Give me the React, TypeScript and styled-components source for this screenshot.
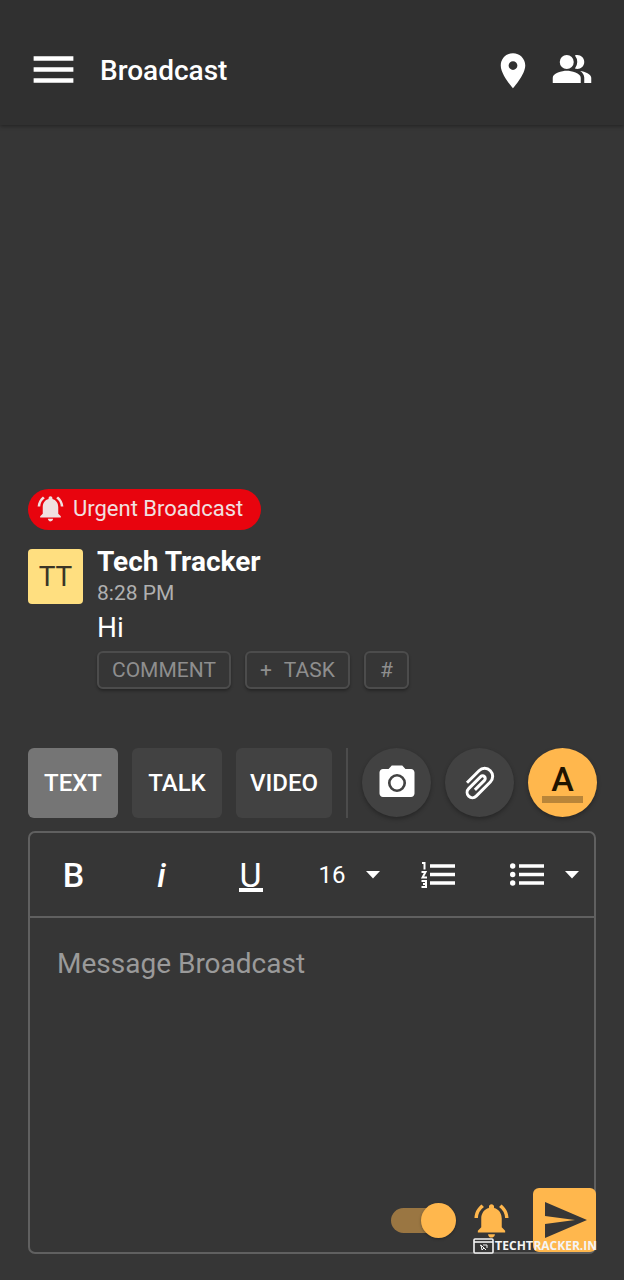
import React from 'react';
import styled, { createGlobalStyle } from 'styled-components';

const Global = createGlobalStyle`
  *, *::before, *::after { box-sizing: border-box; }
  body { margin: 0; background: #363636; color: #fff; font-family: Roboto, "Liberation Sans", sans-serif; }
  button, select, textarea { font-family: inherit; color: inherit; }
  button { border: 0; padding: 0; background: none; cursor: pointer; }
  svg { display: block; }
`;

const Page = styled.div`
  min-height: 100vh;
  display: flex;
  flex-direction: column;
`;

const Header = styled.header`
  display: flex;
  align-items: center;
  height: 125px;
  padding: 13px 31px 0 27px;
  background: #303030;
  box-shadow: 0 1px 4px rgba(0, 0, 0, 0.4);
`;

const Title = styled.h1`
  flex: 1;
  margin: 0 0 0 20px;
  padding-top: 4px;
  font-size: 28px;
  line-height: 32px;
  font-weight: 500;
`;

const HeaderActions = styled.div`
  display: flex;
  gap: 17px;
`;

const Feed = styled.main`
  flex: 1;
  display: flex;
  flex-direction: column;
  justify-content: flex-end;
  align-items: flex-start;
  padding: 28px 28px 59px;
`;

const Badge = styled.div`
  display: flex;
  align-items: center;
  gap: 7px;
  height: 41px;
  padding: 0 18px 3px 7px;
  border-radius: 21px;
  background: #e8040e;
  color: #f0e0e0;
  font-size: 22px;
  margin-bottom: 19px;
`;

const Message = styled.article`
  display: flex;
  gap: 14px;
`;

const Avatar = styled.div`
  display: grid;
  place-items: center;
  width: 55px;
  height: 55px;
  border-radius: 4px;
  background: #ffdf80;
  color: #3a3527;
  font-size: 28px;
`;

const Author = styled.h2`
  margin: -4px 0 0;
  font-size: 28px;
  line-height: 34px;
  font-weight: 700;
`;

const Time = styled.time`
  display: block;
  color: #b0b0b0;
  font-size: 21px;
  line-height: 28px;
`;

const Body = styled.p`
  margin: 4px 0 6px;
  font-size: 28px;
  line-height: 34px;
`;

const Chips = styled.div`
  display: flex;
  gap: 14px;
`;

const Chip = styled.button`
  display: flex;
  align-items: center;
  justify-content: center;
  gap: 12px;
  height: 38px;
  min-width: 45px;
  padding: 0 13px;
  border: 2px solid #4c4c4c;
  border-radius: 6px;
  box-shadow: 0 2px 3px rgba(0, 0, 0, 0.3);
  color: #8e8e8e;
  font-size: 21px;
`;

const Modes = styled.nav`
  display: flex;
  gap: 14px;
  padding-left: 28px;
`;

const Mode = styled.button<{ $active?: boolean }>`
  height: 70px;
  min-width: 90px;
  padding: 0 14px;
  border-radius: 6px;
  background: ${(p) => (p.$active ? '#757575' : '#424242')};
  font-size: 24px;
  font-weight: 500;
`;

const Divider = styled.span`
  width: 2px;
  background: #4c4c4c;
`;

const Round = styled.button<{ $accent?: boolean }>`
  display: flex;
  flex-direction: column;
  align-items: center;
  justify-content: center;
  width: 69px;
  height: 69px;
  border-radius: 50%;
  background: ${(p) => (p.$accent ? '#ffb74d' : '#424242')};
  color: ${(p) => (p.$accent ? '#1f1400' : '#fff')};
  box-shadow: 0 2px 4px rgba(0, 0, 0, 0.3);
`;

const ColorLetter = styled.span`
  font-size: 34px;
  line-height: 34px;
  font-weight: 500;
`;

const ColorBar = styled.span`
  width: 41px;
  height: 7px;
  background: #b98539;
`;

const Editor = styled.section`
  position: relative;
  display: flex;
  flex-direction: column;
  margin: 13px 28px 26px;
  border: 2px solid #606060;
  border-radius: 7px;
`;

const Toolbar = styled.div`
  display: grid;
  grid-template-columns: 87fr 89fr 89fr 108fr 69fr 122fr;
  height: 85px;
  border-bottom: 2px solid #606060;
`;

const Tool = styled.button`
  display: flex;
  align-items: center;
  justify-content: center;
  font-size: 34px;
  line-height: 34px;
`;

const Bold = styled.span`
  font-weight: 500;
`;

const Italic = styled.span`
  font-style: italic;
  font-weight: 500;
`;

const Underlined = styled.span`
  width: 24px;
  height: 34px;
  border-bottom: 4px solid #fff;
`;

const SizeField = styled.label`
  display: flex;
  align-items: center;
  justify-content: center;
  gap: 19px;
`;

const SizeSelect = styled.select`
  appearance: none;
  width: 28px;
  padding: 0;
  border: 0;
  background: none;
  font-size: 24px;
`;

const ListTool = styled(Tool)`
  justify-content: flex-end;
  gap: 21px;
  padding-right: 15px;
`;

const Input = styled.textarea`
  height: 270px;
  padding: 30px 27px;
  border: 0;
  outline: 0;
  resize: none;
  background: none;
  font-size: 28px;
  line-height: 32px;
  &::placeholder { color: #9a9a9a; opacity: 1; }
`;

const Actions = styled.div`
  display: flex;
  align-items: center;
  justify-content: flex-end;
  margin-right: -2px;
`;

const Switch = styled.input`
  appearance: none;
  display: flex;
  align-items: center;
  width: 65px;
  height: 25px;
  margin: 0 15px 0 0;
  cursor: pointer;
  background: linear-gradient(#9a7642, #9a7642) left / 60px 25px no-repeat;
  border-radius: 13px;
  &::before {
    content: "";
    width: 35px;
    height: 35px;
    flex: none;
    margin-left: 30px;
    border-radius: 50%;
    background: #ffb74d;
    box-shadow: 0 1px 3px rgba(0, 0, 0, 0.3);
  }
`;

const Alert = styled.button`
  color: #ffb74d;
  margin-right: 21px;
`;

const Send = styled.button`
  display: grid;
  place-items: center;
  width: 63px;
  height: 64px;
  border-radius: 6px;
  background: #ffb74d;
  color: #363636;
`;

const Watermark = styled.a`
  position: absolute;
  right: -3px;
  bottom: -2px;
  display: flex;
  align-items: center;
  gap: 1px;
  color: #f4f4f4;
  font-family: "Open Sans", sans-serif;
  font-size: 12px;
  line-height: 16px;
  font-weight: 700;
  text-decoration: none;
  text-transform: uppercase;
`;

const Initial = styled.span`
  font-size: 13px;
`;

const BellIcon = ({ size }: { size: number }) => (
  <svg width={size} height={size} viewBox="0 0 24 24" fill="currentColor">
    <path d="M7.58 4.08L6.15 2.65C3.75 4.48 2.17 7.3 2.03 10.5h2a8.445 8.445 0 0 1 3.55-6.42zm12.39 6.42h2c-.15-3.2-1.73-6.02-4.12-7.85l-1.42 1.43a8.495 8.495 0 0 1 3.54 6.42zM18 11c0-3.07-1.64-5.64-4.5-6.32V4c0-.83-.67-1.5-1.5-1.5s-1.5.67-1.5 1.5v.68C7.63 5.36 6 7.92 6 11v5l-2 2v1h16v-1l-2-2v-5zm-6 11c.14 0 .27-.01.4-.04.65-.14 1.18-.58 1.44-1.18.1-.24.15-.5.15-.78h-4c.01 1.1.9 2 2.01 2z" />
  </svg>
);

const Caret = () => (
  <svg width="14" height="8" viewBox="0 0 14 8" fill="currentColor">
    <path d="M0 0h14L7 7.5z" />
  </svg>
);

export default function App() {
  return (
    <Page>
      <Global />
      <Header>
        <button aria-label="Menu">
          <svg width="53" height="53" viewBox="0 0 24 24" fill="currentColor">
            <path d="M3 18h18v-2H3v2zm0-5h18v-2H3v2zm0-7v2h18V6H3z" />
          </svg>
        </button>
        <Title>Broadcast</Title>
        <HeaderActions>
          <button aria-label="Location">
            <svg width="42" height="42" viewBox="0 -1 24 24" fill="currentColor">
              <path d="M12 2C8.13 2 5 5.13 5 9c0 5.25 7 13 7 13s7-7.75 7-13c0-3.87-3.13-7-7-7zm0 9.5a2.5 2.5 0 0 1 0-5 2.5 2.5 0 0 1 0 5z" />
            </svg>
          </button>
          <button aria-label="Members">
            <svg width="42" height="42" viewBox="0 0 24 24" fill="currentColor">
              <path d="M16.67 13.13C18.04 14.06 19 15.32 19 17v3h4v-3c0-2.18-3.57-3.47-6.33-3.87z" />
              <circle cx="9" cy="8" r="4" />
              <path d="M15 12c2.21 0 4-1.79 4-4s-1.79-4-4-4c-.47 0-.91.1-1.33.24a5.98 5.98 0 0 1 0 7.52c.42.14.86.24 1.33.24zM9 13c-2.67 0-8 1.34-8 4v3h16v-3c0-2.66-5.33-4-8-4z" />
            </svg>
          </button>
        </HeaderActions>
      </Header>

      <Feed>
        <Badge>
          <BellIcon size={31} />
          Urgent Broadcast
        </Badge>
        <Message>
          <Avatar>TT</Avatar>
          <div>
            <Author>Tech Tracker</Author>
            <Time>8:28 PM</Time>
            <Body>Hi</Body>
            <Chips>
              <Chip>COMMENT</Chip>
              <Chip><span>+</span><span>TASK</span></Chip>
              <Chip>#</Chip>
            </Chips>
          </div>
        </Message>
      </Feed>

      <Modes>
        <Mode $active>TEXT</Mode>
        <Mode>TALK</Mode>
        <Mode>VIDEO</Mode>
        <Divider />
        <Round aria-label="Camera">
          <svg width="42" height="42" viewBox="0 0 24 24" fill="currentColor">
            <path d="M9 2L7.17 4H4c-1.1 0-2 .9-2 2v12c0 1.1.9 2 2 2h16c1.1 0 2-.9 2-2V6c0-1.1-.9-2-2-2h-3.17L15 2H9z" />
            <circle cx="12" cy="12" r="4.4" fill="none" stroke="#424242" strokeWidth="1.5" />
          </svg>
        </Round>
        <Round aria-label="Attach file">
          <svg width="40" height="40" viewBox="-20 -20 40 40" fill="none" stroke="currentColor" strokeWidth="3">
            <path
              transform="rotate(45)"
              d="M-9.4 9V-8A8 8 0 0 1 6.6 -8V12A5.3 5.3 0 0 1 -4 12V-5A2.65 2.65 0 0 1 1.3 -5V8.5"
            />
          </svg>
        </Round>
        <Round $accent aria-label="Text color">
          <ColorLetter>A</ColorLetter>
          <ColorBar />
        </Round>
      </Modes>

      <Editor>
        <Toolbar>
          <Tool aria-label="Bold"><Bold>B</Bold></Tool>
          <Tool aria-label="Italic"><Italic>i</Italic></Tool>
          <Tool aria-label="Underline"><Underlined>U</Underlined></Tool>
          <SizeField>
            <SizeSelect aria-label="Font size" defaultValue="16">
              <option>16</option>
              <option>18</option>
            </SizeSelect>
            <Caret />
          </SizeField>
          <Tool aria-label="Numbered list">
            <svg width="34" height="26" viewBox="0 0 34 26">
              <path d="M9 4h25M9 12.5h25M9 21h25" stroke="currentColor" strokeWidth="3.6" />
              <path d="M1 1h2.5v6.5M.5 10h4L1.5 15.5h4.5M.5 19h4.5v6H.5M2 22h3" fill="none" stroke="currentColor" strokeWidth="2" />
            </svg>
          </Tool>
          <ListTool aria-label="Bulleted list">
            <svg width="34" height="26" viewBox="0 0 34 26">
              <path d="M9 4h25M9 12.5h25M9 21h25" stroke="currentColor" strokeWidth="3.6" />
              <g fill="currentColor">
                <circle cx="2.7" cy="4" r="2.7" />
                <circle cx="2.7" cy="12.5" r="2.7" />
                <circle cx="2.7" cy="21" r="2.7" />
              </g>
            </svg>
            <Caret />
          </ListTool>
        </Toolbar>
        <Input placeholder="Message Broadcast" aria-label="Message Broadcast" />
        <Actions>
          <Switch type="checkbox" role="switch" aria-label="Urgent" defaultChecked />
          <Alert aria-label="Urgent alert"><BellIcon size={41} /></Alert>
          <Send aria-label="Send">
            <svg width="48" height="48" viewBox="0 0 24 24" fill="currentColor">
              <path d="M2.01 21L23 12 2.01 3 2 10l15 2-15 2z" />
            </svg>
          </Send>
        </Actions>
        <Watermark href="#techtracker">
          <svg width="21" height="16" viewBox="0 0 21 16" fill="none" stroke="currentColor">
            <rect x="1" y="1" width="19" height="14" rx="1" strokeWidth="1.6" fill="#363636" />
            <path d="M1 4h19" strokeWidth="1.6" />
            <path d="M7 7l2 1 4 4M8 7l1 5 2-2M10 7h4v3" />
          </svg>
          <span>
            <Initial>T</Initial>ech<Initial>T</Initial>racker.in
          </span>
        </Watermark>
      </Editor>
    </Page>
  );
}
